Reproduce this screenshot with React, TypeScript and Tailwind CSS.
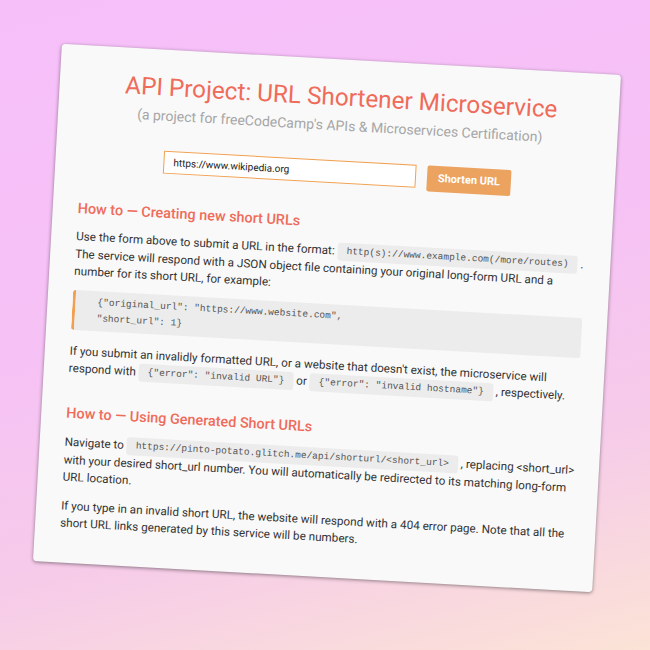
import React from 'react'

const mono = { fontFamily: '"Liberation Mono", "DejaVu Sans Mono", monospace' }

function Code({ children }: { children: React.ReactNode }) {
    return (
        <code
            style={mono}
            className="inline-block bg-[#ececec] text-[#555] text-[9.5px] leading-[12px] px-[9px] py-[3px] rounded-[3px] align-middle"
        >
            {children}
        </code>
    )
}

export default function App() {
    return (
        <div
            className="w-[650px] h-[650px] overflow-hidden flex items-center justify-center pl-[4px] pb-[14px] bg-[linear-gradient(165deg,#f6bffa_0%,#f6c2f5_45%,#f6cbe9_72%,#fbe3d6_100%)]"
            style={{ fontFamily: 'Roboto, "Liberation Sans", sans-serif' }}
        >
            <div className="w-[560px] h-[518px] shrink-0 rotate-[3.2deg] bg-[#f9f9f9] rounded-[4px] shadow-[0_1px_4px_rgba(0,0,0,0.45)] pl-[25px] pr-[21px] pt-[24px]">
                {/* Header */}
                <h1 className="text-center text-[24.3px] leading-[28px] text-[#ef6b5a]">
                    API Project: URL Shortener Microservice
                </h1>
                <p className="text-center text-[14px] leading-[20px] mt-[4px] text-[#a6a6a6]">
                    (a project for freeCodeCamp's APIs &amp; Microservices Certification)
                </p>

                {/* Form */}
                <div className="flex items-start justify-center gap-[11px] mt-[25px]">
                    <div className="w-[253px] h-[23px] bg-white border border-[#f0a050] flex items-center px-[9px] text-[10px] text-[#222]">
                        https://www.wikipedia.org
                    </div>
                    <button className="w-[84px] h-[26px] bg-[#eca35f] rounded-[2px] text-white text-[11px] font-bold">
                        Shorten URL
                    </button>
                </div>

                {/* Section 1 */}
                <h2 className="mt-[27px] text-[14.4px] leading-[20px] font-medium text-[#ef6b5a]">
                    How to — Creating new short URLs
                </h2>
                <p className="mt-[9px] text-[11.7px] leading-[17px] text-[#333]">
                    Use the form above to submit a URL in the format: <Code>http(s)://www.example.com(/more/routes)</Code> .
                    The service will respond with a JSON object file containing your original long-form URL and a number
                    for its short URL, for example:
                </p>
                <pre
                    style={mono}
                    className="mt-[10px] mr-[4px] bg-[#ececec] border-l-[3px] border-[#f0a050] rounded-[3px] pl-[22px] py-[4px] text-[9.5px] leading-[16px] text-[#555]"
                >
                    {'{"original_url": "https://www.website.com",\n"short_url": 1}'}
                </pre>
                <p className="mt-[13px] text-[11.7px] leading-[17px] text-[#333]">
                    If you submit an invalidly formatted URL, or a website that doesn't exist, the microservice will respond
                    with <Code>{'{"error": "invalid URL"}'}</Code> or <Code>{'{"error": "invalid hostname"}'}</Code> ,
                    respectively.
                </p>

                {/* Section 2 */}
                <h2 className="mt-[26px] text-[14.4px] leading-[20px] font-medium text-[#ef6b5a]">
                    How to — Using Generated Short URLs
                </h2>
                <p className="mt-[10px] text-[11.7px] leading-[17px] text-[#333]">
                    Navigate to <Code>{'https://pinto-potato.glitch.me/api/shorturl/<short_url>'}</Code> , replacing
                    &lt;short_url&gt; with your desired short_url number. You will automatically be redirected to its
                    matching long-form URL location.
                </p>
                <p className="mt-[12px] text-[11.7px] leading-[17px] text-[#333]">
                    If you type in an invalid short URL, the website will respond with a 404 error page. Note that all the
                    short URL links generated by this service will be numbers.
                </p>
            </div>
        </div>
    )
}
